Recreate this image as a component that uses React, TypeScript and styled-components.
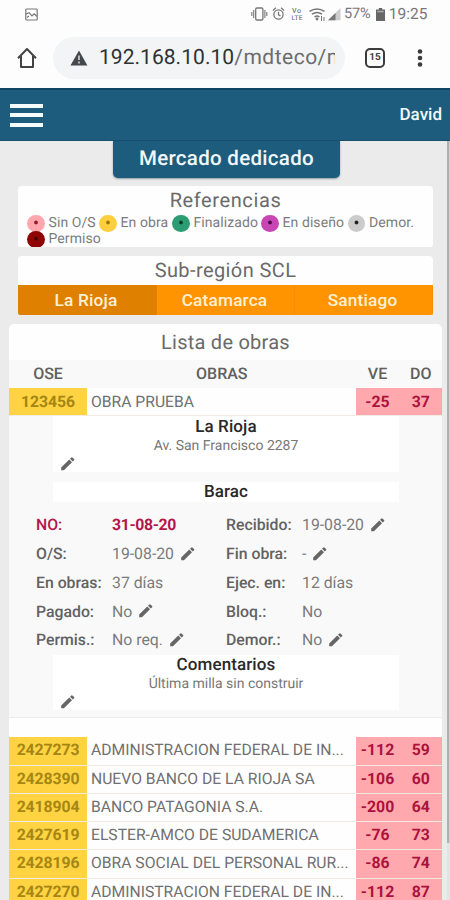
import React from 'react';
import styled, { createGlobalStyle } from 'styled-components';
import { MdEdit } from 'react-icons/md';

const GlobalStyle = createGlobalStyle`
  * { box-sizing: border-box; }
  body {
    margin: 0;
    background: #ebebeb;
    font-family: Roboto, "Liberation Sans", sans-serif;
    text-rendering: geometricPrecision;
  }
`;

const Screen = styled.div`
  width: 450px;
  height: 900px;
  overflow: hidden;
  display: flex;
  flex-direction: column;
  background: #ebebeb;
  color: #686868;
`;

const StatusBar = styled.div`
  flex: 0 0 28px;
  display: flex;
  align-items: center;
  padding: 0 22px 0 25px;
  background: #fdfdfd;
  color: #777;
`;
const StatusIcons = styled.div`
  margin-left: auto;
  display: flex;
  align-items: center;
`;
const StatusText = styled.span<{ $w: number; $size: number; $ls?: number }>`
  width: ${p => p.$w}px;
  font-size: ${p => p.$size}px;
  letter-spacing: ${p => p.$ls ?? 0}px;
  line-height: 28px;
  white-space: nowrap;
`;

const BrowserBar = styled.div`
  flex: 0 0 60px;
  display: flex;
  align-items: center;
  padding: 0 20px 0 17px;
  background: #fdfdfd;
`;
const AddressPill = styled.div`
  width: 292px;
  height: 42px;
  margin: 0 20px 0 16px;
  padding: 0 10px 0 17px;
  border-radius: 21px;
  background: #f2f4f5;
  display: flex;
  align-items: center;
`;
const Url = styled.div`
  width: 237px;
  margin-left: 11px;
  overflow: hidden;
  white-space: nowrap;
  font-size: 21px;
  line-height: 30px;
  letter-spacing: 0.5px;
  color: #6a6c6e;
`;
const Host = styled.span`
  letter-spacing: 0.05px;
  color: #303234;
`;
const TabCount = styled.div`
  width: 20px;
  height: 20px;
  margin-right: 32px;
  border: 2px solid #3b3b3b;
  border-radius: 5px;
  font-size: 10px;
  font-weight: 700;
  line-height: 16px;
  text-align: center;
  color: #444;
`;

const AppHeader = styled.header`
  flex: 0 0 53px;
  display: flex;
  align-items: center;
  justify-content: space-between;
  padding: 0 8px 0 10px;
  background: #1d5c7c;
  border-top: 2px solid #0d4563;
  border-bottom: 1px solid #164f6d;
  color: #f2f8fb;
  font-size: 17px;
  font-weight: 500;
  line-height: 50px;
`;
const MenuButton = styled.button`
  width: 33px;
  height: 23px;
  padding: 0;
  border: 0;
  background: none;
  display: flex;
  flex-direction: column;
  justify-content: space-between;
`;
const MenuLine = styled.span`
  height: 4px;
  width: 33px;
  background: #f6fbfd;
`;

const Viewport = styled.div`
  flex: 1;
  min-height: 0;
  display: flex;
`;
const Content = styled.main`
  width: 447px;
  padding-left: 9px;
  flex: none;
`;
const ScrollTrack = styled.div`
  width: 3px;
  background: #e3e3e3;
`;
const ScrollThumb = styled.div`
  height: 702px;
  width: 3px;
  background: #b0b0b0;
  border-right: 1px solid #d0d0d0;
`;

const PageTitle = styled.h1`
  width: 227px;
  height: 37px;
  margin: 0 0 8px 104px;
  border-radius: 0 0 5px 5px;
  background: #1d5c7c;
  box-shadow: 0 1px 2px rgba(0, 40, 60, 0.4);
  color: #f0f6f9;
  font-size: 20.5px;
  font-weight: 500;
  letter-spacing: 0.3px;
  line-height: 36px;
  text-align: center;
`;

const Card = styled.section<{ $h: number; $gap: number }>`
  width: 415px;
  height: ${p => p.$h}px;
  margin: 0 0 ${p => p.$gap}px 9px;
  border-radius: 4px 4px 2px 2px;
  background: #fefefe;
  overflow: hidden;
`;
const CardTitle = styled.h2<{ $lh: number; $ls?: number }>`
  margin: 0;
  font-size: 20px;
  font-weight: 400;
  line-height: ${p => p.$lh}px;
  letter-spacing: ${p => p.$ls ?? 0.4}px;
  text-align: center;
  color: #6a6a6a;
`;

const Legend = styled.div`
  display: grid;
  grid-template-columns: 72px 73px 89px 86.5px 80px;
  grid-auto-rows: 16px;
  padding-left: 9px;
`;
const LegendItem = styled.div`
  display: flex;
  align-items: center;
  gap: 4px;
  font-size: 14px;
  letter-spacing: 0.08px;
  white-space: nowrap;
  color: #7c7c7c;
`;
const Dot = styled.span<{ $color: string; $pip: string }>`
  flex: none;
  width: 17.5px;
  height: 17px;
  border-radius: 50%;
  background: radial-gradient(circle at 50% 44%, ${p => p.$pip} 1.3px, ${p => p.$color} 2.4px);
`;

const Tabs = styled.div`
  display: grid;
  grid-template-columns: 139px 138px 138px;
`;
const Tab = styled.button<{ $active?: boolean }>`
  height: 30px;
  padding: 0 2px 0 0;
  border: 0;
  border-right: 1px solid ${p => (p.$active ? '#e08000' : '#f78f02')};
  background: ${p => (p.$active ? '#e08000' : '#ff9400')};
  color: #fff0d4;
  font: 500 17.3px/30px Roboto, sans-serif;
  letter-spacing: 0.15px;
`;

const ListCard = styled.section`
  width: 433px;
  height: 590px;
  border-radius: 5px 5px 0 0;
  background: #fefefe;
  overflow: hidden;
`;
const TableRow = styled.div<{ $head?: boolean; $line?: number }>`
  display: grid;
  grid-template-columns: 78px 268.5px 44px 42.5px;
  height: ${p => (p.$head ? 28 : 28.3)}px;
  background: ${p => (p.$head ? '#f9f9f9' : '#fefefe')};
  border-bottom: ${p => (p.$head ? 0 : 1)}px solid #f1ebe4;
  line-height: ${p => p.$line ?? 27}px;
`;
const HeadCell = styled.div<{ $shift?: number }>`
  padding-left: ${p => p.$shift ?? 0}px;
  font-size: 16px;
  font-weight: 500;
  text-align: center;
  color: #606060;
`;
const OseCell = styled.div`
  background: #ffd342;
  color: #a58613;
  font-size: 15.8px;
  font-weight: 700;
  letter-spacing: -0.1px;
  text-align: center;
`;
const WorkCell = styled.div`
  padding-left: 4px;
  font-size: 15.7px;
  white-space: nowrap;
  color: #707070;
`;
const DaysCell = styled.div`
  background: #ffa9ae;
  color: #ab123d;
  font-size: 15.8px;
  font-weight: 700;
  text-align: center;
`;

const Detail = styled.div`
  height: 302px;
  margin-bottom: 19px;
  background: #f9f9f9;
  border-bottom: 1px solid #ececec;
`;
const InfoBox = styled.div<{ $h: number; $gap: number; $top?: number }>`
  width: 346px;
  height: ${p => p.$h}px;
  margin: 0 0 ${p => p.$gap}px 44px;
  padding-top: ${p => p.$top ?? 0}px;
  background: #fff;
  text-align: center;
`;
const InfoTitle = styled.h3`
  margin: 0;
  font-size: 17px;
  font-weight: 500;
  line-height: 21px;
  letter-spacing: 0.1px;
  color: #292929;
`;
const InfoText = styled.p`
  margin: 0;
  font-size: 14px;
  line-height: 17px;
  letter-spacing: 0;
  color: #777;
`;
const EditLine = styled.div`
  display: flex;
  height: 17px;
  padding-left: 6px;
  align-items: center;
`;
const Pencil = styled(MdEdit)`
  flex: none;
  width: 17.5px;
  height: 17.5px;
  color: #666;
`;

const Fields = styled.div`
  display: grid;
  grid-template-columns: 76px 114px 76px 120px;
  grid-auto-rows: 28.8px;
  height: 144.5px;
  padding-left: 27px;
  align-items: center;
`;
const FieldLabel = styled.div<{ $alert?: boolean }>`
  font-size: 15.8px;
  font-weight: 500;
  color: ${p => (p.$alert ? '#b4164a' : '#626262')};
`;
const FieldValue = styled.div<{ $alert?: boolean }>`
  display: flex;
  align-items: center;
  gap: 5px;
  white-space: nowrap;
  font-size: 15.8px;
  font-weight: ${p => (p.$alert ? 700 : 400)};
  letter-spacing: ${p => (p.$alert ? -0.35 : 0)}px;
  color: ${p => (p.$alert ? '#b4164a' : '#7b7b7b')};
`;

const legend = [
  { label: 'Sin O/S', color: '#ffa7ac', pip: '#97152d' },
  { label: 'En obra', color: '#fdcf3f', pip: '#987708' },
  { label: 'Finalizado', color: '#2c9d73', pip: '#073e2b' },
  { label: 'En diseño', color: '#c846b4', pip: '#4b0846' },
  { label: 'Demor.', color: '#cbcbcb', pip: '#1c1c1c' },
  { label: 'Permiso', color: '#8f0404', pip: '#4c0000' },
];

const fields = [
  { label: 'NO:', value: '31-08-20', alert: true },
  { label: 'Recibido:', value: '19-08-20', edit: true },
  { label: 'O/S:', value: '19-08-20', edit: true },
  { label: 'Fin obra:', value: '-', edit: true },
  { label: 'En obras:', value: '37 días' },
  { label: 'Ejec. en:', value: '12 días' },
  { label: 'Pagado:', value: 'No', edit: true },
  { label: 'Bloq.:', value: 'No' },
  { label: 'Permis.:', value: 'No req.', edit: true },
  { label: 'Demor.:', value: 'No', edit: true },
];

const works = [
  ['2427273', 'ADMINISTRACION FEDERAL DE IN...', '-112', '59'],
  ['2428390', 'NUEVO BANCO DE LA RIOJA SA', '-106', '60'],
  ['2418904', 'BANCO PATAGONIA S.A.', '-200', '64'],
  ['2427619', 'ELSTER-AMCO DE SUDAMERICA', '-76', '73'],
  ['2428196', 'OBRA SOCIAL DEL PERSONAL RUR...', '-86', '74'],
  ['2427270', 'ADMINISTRACION FEDERAL DE IN...', '-112', '87'],
];

function WorkRow({ data, line }: { data: string[]; line: number }) {
  return (
    <TableRow $line={line}>
      <OseCell>{data[0]}</OseCell>
      <WorkCell>{data[1]}</WorkCell>
      <DaysCell>{data[2]}</DaysCell>
      <DaysCell>{data[3]}</DaysCell>
    </TableRow>
  );
}

const PictureIcon = () => (
  <svg width="13" height="13" viewBox="0 0 13 13" fill="none" stroke="#777" strokeWidth="1.2">
    <rect x="0.8" y="1" width="11.4" height="11" rx="0.8" />
    <path d="M1 6 L4 4.7 L7 8 L9.2 5.8 L12 8.5 M2 9.5 L4 8" />
  </svg>
);

const SystemIcons = () => (
  <svg width="93" height="18" viewBox="0 0 93 18" fill="none" stroke="#777" strokeWidth="1.3">
    <rect x="4.7" y="3" width="7.2" height="12" rx="1.2" />
    <path d="M2.7 5v8M13.9 5v8M0.8 7v4M15.8 7v4" strokeWidth="1.1" />
    <circle cx="27.5" cy="9.5" r="4.6" />
    <path d="M27.5 6.8v3l2 1M21.9 5.4l3-2.6M33.1 5.4l-3-2.6" />
    <text x="41" y="8.4" fill="#777" stroke="none" fontSize="7" fontWeight="500" textLength="9">Vo</text>
    <text x="40.5" y="15" fill="#777" stroke="none" fontSize="6.5" fontWeight="500" textLength="11">LTE</text>
    <path d="M58.5 6.4q7.5-5 15 0M61 9.2q5-3.5 10 0M63.5 12q2.5-1.8 5 0" strokeWidth="1.5" />
    <circle cx="66" cy="14" r="1.4" fill="#777" stroke="none" />
    <path d="M70.5 11v5M73 16v-4" strokeWidth="1" />
    <path d="M77 15.2 L89.5 3v12.2z" fill="#ccc" stroke="none" />
    <path d="M77 15.2 L84.5 8v7.2z" fill="#777" stroke="none" />
  </svg>
);

export default function App() {
  return (
    <>
      <GlobalStyle />
      <Screen>
        <StatusBar>
          <PictureIcon />
          <StatusIcons>
            <SystemIcons />
            <StatusText $w={32} $size={14.5} $ls={-0.1}>57%</StatusText>
            <svg width="9" height="13" viewBox="0 0 9 13">
              <path d="M2.8 0h3.4v1.5H9V13H0V1.5h2.8z" fill="#666" />
              <path d="M1.3 2.8h6.4v1.5H1.3z" fill="#aaa" />
            </svg>
            <StatusText $w={43} $size={15.5}>&nbsp;19:25</StatusText>
          </StatusIcons>
        </StatusBar>
        <BrowserBar>
          <svg width="20" height="22" viewBox="0 0 20 22" fill="none" stroke="#434343" strokeWidth="2">
            <path d="M1 11.2 L10 2 L19 11.2 M4 9v11h12V9" strokeLinejoin="round" />
          </svg>
          <AddressPill>
            <svg width="18" height="16" viewBox="0 0 18 16">
              <path d="M9 0.5 L17.5 15.5H0.5z" fill="#45484a" />
              <path d="M8 5.5h2v4.5H8zM8 11.6h2v1.9H8z" fill="#b7babc" />
            </svg>
            <Url><Host>192.168.10.10</Host>/mdteco/m</Url>
          </AddressPill>
          <TabCount>15</TabCount>
          <svg width="6" height="20" viewBox="0 0 6 20" fill="#3b3b3b">
            <circle cx="3" cy="3.5" r="2.3" />
            <circle cx="3" cy="10" r="2.3" />
            <circle cx="3" cy="16.5" r="2.3" />
          </svg>
        </BrowserBar>
        <AppHeader>
          <MenuButton aria-label="Menú"><MenuLine /><MenuLine /><MenuLine /></MenuButton>
          <span>David</span>
        </AppHeader>
        <Viewport>
          <Content>
            <PageTitle>Mercado dedicado</PageTitle>
            <Card $h={61} $gap={9}>
              <CardTitle $lh={29} $ls={0.6}>Referencias</CardTitle>
              <Legend>
                {legend.map(item => (
                  <LegendItem key={item.label}>
                    <Dot $color={item.color} $pip={item.pip} />
                    {item.label}
                  </LegendItem>
                ))}
              </Legend>
            </Card>
            <Card $h={59} $gap={9}>
              <CardTitle $lh={29}>Sub-región SCL</CardTitle>
              <Tabs>
                <Tab $active>La Rioja</Tab>
                <Tab>Catamarca</Tab>
                <Tab>Santiago</Tab>
              </Tabs>
            </Card>
            <ListCard>
              <CardTitle $lh={36} $ls={0.25}>Lista de obras</CardTitle>
              <TableRow $head>
                <HeadCell>OSE</HeadCell>
                <HeadCell $shift={1}>OBRAS</HeadCell>
                <HeadCell>VE</HeadCell>
                <HeadCell>DO</HeadCell>
              </TableRow>
              <WorkRow data={['123456', 'OBRA PRUEBA', '-25', '37']} line={27} />
              <Detail>
                <InfoBox $h={56} $gap={9.5} $top={1}>
                  <InfoTitle>La Rioja</InfoTitle>
                  <InfoText>Av. San Francisco 2287</InfoText>
                  <EditLine><Pencil /></EditLine>
                </InfoBox>
                <InfoBox $h={20} $gap={8.5}>
                  <InfoTitle>Barac</InfoTitle>
                </InfoBox>
                <Fields>
                  {fields.map(f => (
                    <React.Fragment key={f.label}>
                      <FieldLabel $alert={f.alert}>{f.label}</FieldLabel>
                      <FieldValue $alert={f.alert}>
                        {f.value}
                        {f.edit && <Pencil />}
                      </FieldValue>
                    </React.Fragment>
                  ))}
                </Fields>
                <InfoBox $h={55} $gap={0}>
                  <InfoTitle>Comentarios</InfoTitle>
                  <InfoText>Última milla sin construir</InfoText>
                  <EditLine><Pencil /></EditLine>
                </InfoBox>
              </Detail>
              {works.map(row => <WorkRow key={row[0]} data={row} line={25} />)}
            </ListCard>
          </Content>
          <ScrollTrack><ScrollThumb /></ScrollTrack>
        </Viewport>
      </Screen>
    </>
  );
}
